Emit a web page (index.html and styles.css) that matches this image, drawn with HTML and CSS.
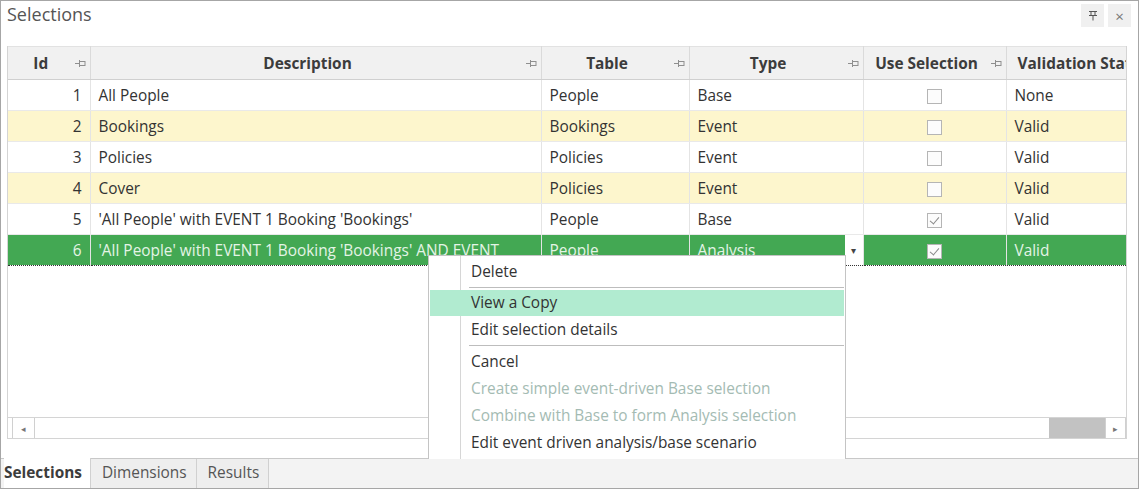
FILE: index.html
```html
<!DOCTYPE html>
<html lang="en">
<head>
  <meta charset="UTF-8">
  <title>Selections</title>
  <link rel="stylesheet" href="styles.css">
</head>
<body>

  <div class="window">
    <div class="titlebar">
      <span class="title">Selections</span>
      <div class="title-buttons">
        <span class="tbtn">
          <svg width="10" height="11" viewBox="0 0 10 11"><path d="M1 1.5h8M3 1.5v4h4v-4M1 5.5h8M5 5.5v5" stroke="#555" fill="none"/></svg>
        </span>
        <span class="tbtn close">&times;</span>
      </div>
    </div>

    <div class="content">
      <div class="grid">
        <table class="rows">
          <colgroup>
            <col style="width:82px">
            <col style="width:451px">
            <col style="width:148px">
            <col style="width:174px">
            <col style="width:143px">
            <col style="width:140px">
          </colgroup>
          <thead>
            <tr>
              <th>Id<svg class="pin" width="11" height="8" viewBox="0 0 11 8"><path d="M0 4.5h4M4.5 1v7M4.5 2.5h5.5M4.5 6.5h5.5M10 2v5" stroke="#8f8f8f" fill="none"/></svg></th>
              <th>Description<svg class="pin" width="11" height="8" viewBox="0 0 11 8"><path d="M0 4.5h4M4.5 1v7M4.5 2.5h5.5M4.5 6.5h5.5M10 2v5" stroke="#8f8f8f" fill="none"/></svg></th>
              <th>Table<svg class="pin" width="11" height="8" viewBox="0 0 11 8"><path d="M0 4.5h4M4.5 1v7M4.5 2.5h5.5M4.5 6.5h5.5M10 2v5" stroke="#8f8f8f" fill="none"/></svg></th>
              <th>Type<svg class="pin" width="11" height="8" viewBox="0 0 11 8"><path d="M0 4.5h4M4.5 1v7M4.5 2.5h5.5M4.5 6.5h5.5M10 2v5" stroke="#8f8f8f" fill="none"/></svg></th>
              <th>Use Selection<svg class="pin" width="11" height="8" viewBox="0 0 11 8"><path d="M0 4.5h4M4.5 1v7M4.5 2.5h5.5M4.5 6.5h5.5M10 2v5" stroke="#8f8f8f" fill="none"/></svg></th>
              <th class="clip">Validation Status</th>
            </tr>
          </thead>
          <tbody>
            <tr>
              <td class="num">1</td><td>All People</td><td>People</td><td>Base</td>
              <td class="chk"><span class="box"></span></td><td>None</td>
            </tr>
            <tr class="alt">
              <td class="num">2</td><td>Bookings</td><td>Bookings</td><td>Event</td>
              <td class="chk"><span class="box"></span></td><td>Valid</td>
            </tr>
            <tr>
              <td class="num">3</td><td>Policies</td><td>Policies</td><td>Event</td>
              <td class="chk"><span class="box"></span></td><td>Valid</td>
            </tr>
            <tr class="alt">
              <td class="num">4</td><td>Cover</td><td>Policies</td><td>Event</td>
              <td class="chk"><span class="box"></span></td><td>Valid</td>
            </tr>
            <tr>
              <td class="num">5</td><td>'All People' with EVENT 1 Booking 'Bookings'</td><td>People</td><td>Base</td>
              <td class="chk"><span class="box checked"></span></td><td>Valid</td>
            </tr>
            <tr class="selected">
              <td class="num">6</td><td>'All People' with EVENT 1 Booking 'Bookings' AND EVENT</td><td>People</td>
              <td class="drop">Analysis<span class="drop-btn">&#9662;</span></td>
              <td class="chk"><span class="box checked"></span></td><td>Valid</td>
            </tr>
          </tbody>
        </table>

        <div class="hscroll">
          <span class="sbtn left">&#9666;</span>
          <span class="track"></span>
          <span class="thumb"></span>
          <span class="sbtn right">&#9656;</span>
        </div>
      </div>
    </div>

    <div class="tabs">
      <span class="tab active">Selections</span>
      <span class="tab">Dimensions</span>
      <span class="tab">Results</span>
    </div>

    <div class="menu">
      <div class="item">Delete</div>
      <div class="sep"></div>
      <div class="item hover">View a Copy</div>
      <div class="item">Edit selection details</div>
      <div class="sep"></div>
      <div class="item">Cancel</div>
      <div class="item disabled">Create simple event-driven Base selection</div>
      <div class="item disabled">Combine with Base to form Analysis selection</div>
      <div class="item">Edit event driven analysis/base scenario</div>
    </div>
  </div>

</body>
</html>
```

FILE: styles.css
```css
* {
  box-sizing: border-box;
}

body {
  margin: 0;
  font-family: 'Open Sans', 'Noto Sans', sans-serif;
  font-size: 15.4px;
  color: #333;
  background: #ffffff;
}

.window {
  position: relative;
  width: 1139px;
  height: 489px;
  border: 1px solid #a6a6a6;
  display: flex;
  flex-direction: column;
  overflow: hidden;
}

.titlebar {
  height: 45px;
  display: flex;
  justify-content: space-between;
  align-items: flex-start;
  padding: 1px 6px 0 6px;
}

.title {
  font-size: 18px;
  color: #555;
  line-height: 25px;
}

.title-buttons {
  display: flex;
  gap: 4px;
  margin-top: 2px;
  margin-right: 1px;
}

.tbtn {
  width: 23px;
  height: 23px;
  background: #f0f0f0;
  display: flex;
  align-items: center;
  justify-content: center;
  color: #777;
  font-size: 15px;
}

.content {
  flex: 1;
  padding: 0 11px 19px 6px;
}

.grid {
  height: 100%;
  border: 1px solid #d4d4d4;
  border-top: none;
  display: flex;
  flex-direction: column;
  justify-content: space-between;
  overflow: hidden;
}

.rows {
  border-collapse: collapse;
  table-layout: fixed;
  width: 1138px;
}

.rows th {
  height: 33px;
  background: #f1f1f1;
  border-top: 1px solid #e2e2e2;
  border-right: 1px solid #dadada;
  border-bottom: 1px solid #d0d0d0;
  font-weight: 700;
  color: #3c3c3c;
  text-align: center;
  position: relative;
  padding: 0 16px 0 0;
  white-space: nowrap;
}

.rows th.clip {
  text-align: left;
  padding-left: 11px;
  overflow: hidden;
}

.pin {
  position: absolute;
  right: 4px;
  top: 12px;
}

.rows td {
  height: 31px;
  padding: 0 8px;
  border-right: 1px solid #e4e4e4;
  border-bottom: 1px solid #e9e9e9;
  white-space: nowrap;
  overflow: hidden;
  color: #333;
}

.rows td.num {
  text-align: right;
}

.rows tr.alt td {
  background: #fdf6cd;
}

.rows tr.selected td {
  background: #43a853;
  color: #e4f4e6;
  border-top: 1px dotted #333;
  border-bottom: 1px dotted #333;
}

.rows td.chk {
  text-align: center;
  padding: 0;
}

.box {
  display: inline-block;
  width: 15px;
  height: 15px;
  border: 1px solid #b5b5b5;
  background: #fcfcfc;
  vertical-align: middle;
  position: relative;
}

.box.checked::after {
  content: "";
  position: absolute;
  left: 4px;
  top: 1px;
  width: 4px;
  height: 8px;
  border: solid #8a8a8a;
  border-width: 0 1.5px 1.5px 0;
  transform: rotate(40deg);
}

.rows td.drop {
  position: relative;
}

.drop-btn {
  position: absolute;
  right: 0;
  top: 0;
  bottom: 0;
  width: 18px;
  background: #ffffff;
  color: #444;
  font-size: 10px;
  display: flex;
  align-items: center;
  justify-content: center;
}

.hscroll {
  height: 21px;
  border-top: 1px solid #d4d4d4;
  display: flex;
  background: #ffffff;
}

.sbtn {
  width: 21px;
  border-right: 1px solid #d0d0d0;
  border-left: 1px solid #d0d0d0;
  color: #777;
  font-size: 9px;
  display: flex;
  align-items: center;
  justify-content: center;
}

.sbtn.left {
  margin-left: 4px;
  width: 23px;
}

.track {
  flex: 1;
}

.thumb {
  width: 56px;
  background: #c2c2c2;
}

.tabs {
  height: 30px;
  background: #f3f3f3;
  border-top: 1px solid #c8c8c8;
  display: flex;
  padding-left: 3px;
}

.tab {
  padding: 0 9px 0 11px;
  line-height: 28px;
  color: #555;
  background: #eeeeee;
  border-right: 1px solid #d0d0d0;
}

.tab.active {
  background: #ffffff;
  font-weight: 700;
  color: #3c3c3c;
  margin-top: -1px;
  padding: 1px 8px 0 0;
}

.menu {
  position: absolute;
  left: 427px;
  top: 254px;
  width: 418px;
  height: 204px;
  background: #ffffff;
  border: 1px solid #c4c4c4;
  border-bottom: none;
  padding: 2px 1px 0 1px;
  background-image: linear-gradient(#d6d6d6, #d6d6d6);
  background-size: 1px 100%;
  background-position: 31px 0;
  background-repeat: no-repeat;
}

.item {
  height: 27px;
  line-height: 27px;
  padding-left: 41px;
  color: #333;
}

.item.hover {
  background: #b1ebd0;
  height: 26px;
  line-height: 26px;
}

.item.disabled {
  color: #a4bbb3;
}

.sep {
  height: 1px;
  margin: 2px 0 2px 39px;
  background: #bdbdbd;
}
```
